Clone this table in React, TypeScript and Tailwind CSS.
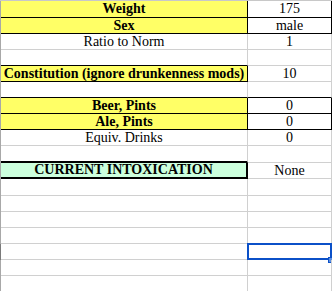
import React from "react";

type Row = {
  h: string;
  a?: string;
  b?: string;
  aCls: string;
  bCls: string;
  aBold?: boolean;
  edge?: string;
  sel?: boolean;
};

const Y = "bg-[#ffff66]";
const G = "border-[#d0d0d0]";

const rows: Row[] = [
  { h: "h-[17px]", a: "Weight", b: "175", aBold: true, aCls: `${Y} border-b border-r border-black`, bCls: "border-b border-r border-black" },
  { h: "h-4", a: "Sex", b: "male", aBold: true, aCls: `${Y} border-b border-r border-black`, bCls: "border-b border-r border-black" },
  { h: "h-4", a: "Ratio to Norm", b: "1", aCls: `border-b border-r ${G}`, bCls: `border-b border-r ${G}` },
  { h: "h-4", aCls: "border-b border-r border-b-black border-r-[#d0d0d0]", bCls: `border-b border-r ${G}` },
  { h: "h-4", a: "Constitution (ignore drunkenness mods)", b: "10", aBold: true, aCls: `${Y} border-b border-r border-black`, bCls: `border-b border-r ${G}` },
  { h: "h-4", aCls: "border-b border-r border-b-black border-r-[#d0d0d0]", bCls: "border-b border-r border-b-black border-r-[#d0d0d0]" },
  { h: "h-4", a: "Beer, Pints", b: "0", aBold: true, aCls: `${Y} border-b border-r border-black`, bCls: "border-b border-r border-black" },
  { h: "h-4", a: "Ale, Pints", b: "0", aBold: true, aCls: `${Y} border-b border-r border-black`, bCls: "border-b border-r border-black" },
  { h: "h-4", a: "Equiv. Drinks", b: "0", aCls: `border-b border-r ${G}`, bCls: `border-b border-r ${G}` },
  { h: "h-[17px]", aCls: "border-b-2 border-r border-b-black border-r-[#d0d0d0]", bCls: `border-b border-r ${G}` },
  { h: "h-4", a: "CURRENT INTOXICATION", b: "None", aBold: true, aCls: "bg-[#ccffdd] border-b-2 border-r-2 border-black", bCls: `border-b border-r ${G}` },
  { h: "h-[17px]", aCls: `border-b border-r ${G}`, bCls: `border-b border-r ${G}` },
  { h: "h-4", aCls: `border-b border-r ${G}`, bCls: `border-b border-r ${G}` },
  { h: "h-4", aCls: `border-b border-r ${G}`, bCls: `border-b border-r ${G}` },
  { h: "h-4", aCls: `border-b border-r ${G}`, bCls: `border-b border-r ${G}` },
  { h: "h-4", aCls: `border-b border-r ${G}`, bCls: `border-b border-r ${G}`, sel: true },
  { h: "h-4", aCls: `border-b border-r ${G}`, bCls: `border-b border-r ${G}` },
  { h: "h-4", aCls: `border-b border-r ${G}`, bCls: `border-b border-r ${G}` },
];

export default function App() {
  return (
    <div
      className="w-[332px] h-[291px] overflow-hidden bg-white text-black text-[14px] leading-none"
      style={{ fontFamily: '"Liberation Serif", "Times New Roman", serif' }}
    >
      <div className="h-px bg-[#c8c8c8]" />
      {rows.map((r, i) => (
        <div key={i} className={`flex ${r.h}`}>
          <div className={`w-px shrink-0 ${r.sel ? "bg-[#7a7a7a]" : "bg-[#a8a8a8]"}`} />
          <div
            className={`w-[247px] shrink-0 flex items-center justify-center ${r.aCls} ${
              r.aBold ? "font-bold" : ""
            }`}
          >
            {r.a}
          </div>
          <div className={`relative w-[84px] shrink-0 flex items-center justify-center ${r.bCls}`}>
            {r.b}
            {r.sel && (
              <>
                <div className="absolute left-[-1px] top-[-1px] right-[-1px] bottom-[-1px] border-2 border-[#0b50c8]" />
                <div className="absolute right-[-2px] bottom-[-4px] w-[5px] h-[6px] bg-[#5b8fe0] border border-[#0b50c8]" />
              </>
            )}
          </div>
        </div>
      ))}
    </div>
  );
}
